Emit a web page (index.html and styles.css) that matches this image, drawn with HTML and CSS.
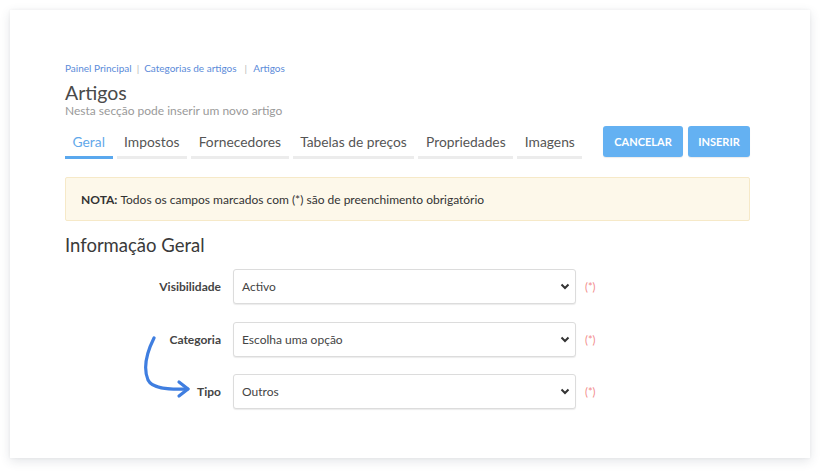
FILE: index.html
```html
<!DOCTYPE html>
<html lang="pt">
<head>
<meta charset="utf-8">
<title>Artigos</title>
<link rel="stylesheet" href="styles.css">
</head>
<body>
<div class="card">
  <nav class="crumbs">
    <a>Painel Principal</a><span class="sep">|</span><a>Categorias de artigos</a><span class="sep sep2">|</span><a>Artigos</a>
  </nav>
  <h1 class="title">Artigos</h1>
  <p class="subtitle">Nesta secção pode inserir um novo artigo</p>

  <div class="toolbar">
    <ul class="tabs">
      <li class="tab active">Geral</li>
      <li class="tab">Impostos</li>
      <li class="tab">Fornecedores</li>
      <li class="tab">Tabelas de preços</li>
      <li class="tab">Propriedades</li>
      <li class="tab">Imagens</li>
    </ul>
    <div class="actions">
      <button class="btn btn-cancel">CANCELAR</button>
      <button class="btn btn-insert">INSERIR</button>
    </div>
  </div>

  <div class="note"><b>NOTA:</b> Todos os campos marcados com (*) são de preenchimento obrigatório</div>

  <h2 class="section">Informação Geral</h2>

  <div class="form">
    <svg class="arrow" width="60" height="80" viewBox="0 0 60 80">
      <path d="M12 4 C5 18 1 34 6 46 C10 54 24 56 46 55" fill="none" stroke="#3f7ee0" stroke-width="3.2" stroke-linecap="round"/>
      <path d="M37 48 L46 55 L37 62" fill="none" stroke="#3f7ee0" stroke-width="3.2" stroke-linecap="round" stroke-linejoin="round"/>
    </svg>
    <div class="row">
      <label class="label">Visibilidade</label>
      <div class="select"><span>Activo</span><svg class="chev" width="10" height="7" viewBox="0 0 10 7"><path d="M1.5 1.5 L5 5 L8.5 1.5" fill="none" stroke="#333" stroke-width="2"/></svg></div>
      <span class="req">(*)</span>
    </div>
    <div class="row">
      <label class="label">Categoria</label>
      <div class="select"><span>Escolha uma opção</span><svg class="chev" width="10" height="7" viewBox="0 0 10 7"><path d="M1.5 1.5 L5 5 L8.5 1.5" fill="none" stroke="#333" stroke-width="2"/></svg></div>
      <span class="req">(*)</span>
    </div>
    <div class="row">
      <label class="label">Tipo</label>
      <div class="select"><span>Outros</span><svg class="chev" width="10" height="7" viewBox="0 0 10 7"><path d="M1.5 1.5 L5 5 L8.5 1.5" fill="none" stroke="#333" stroke-width="2"/></svg></div>
      <span class="req">(*)</span>
    </div>
  </div>
</div>
</body>
</html>
```

FILE: styles.css
```css
* { box-sizing: border-box; }
html, body { margin: 0; padding: 0; background: #ffffff; }
body {
  font-family: Lato, "Open Sans", "Liberation Sans", sans-serif;
  color: #444;
  width: 824px;
  height: 473px;
  overflow: hidden;
}
.card {
  margin: 10px 0 0 10px;
  width: 800px;
  height: 448px;
  background: #fff;
  box-shadow: 0 3px 10px rgba(60, 70, 90, 0.14), 0 0 3px rgba(60, 70, 90, 0.06);
  padding: 52px 60px 0 55px;
  position: relative;
}
.crumbs {
  font-size: 10px;
  line-height: 12px;
  color: #5b8bd9;
  display: flex;
  align-items: center;
}
.crumbs a { color: #5b8bd9; }
.sep { color: #b8b8b8; margin: 0 5px; }
.sep2 { margin: 0 6px 0 8px; }
.title {
  margin: 8px 0 0;
  font-size: 19.5px;
  line-height: 22px;
  font-weight: 400;
  color: #4a4a4a;
}
.subtitle {
  margin: 0;
  font-size: 12px;
  line-height: 14px;
  color: #9a9a9a;
}
.toolbar {
  display: flex;
  justify-content: space-between;
  align-items: flex-start;
  margin-top: 8px;
  width: 685px;
}
.tabs {
  list-style: none;
  margin: 0;
  padding: 0;
  display: flex;
  gap: 4px;
  padding-top: 2px;
}
.tab {
  font-size: 13.8px;
  line-height: 16px;
  padding: 6px 7.6px 6px;
  color: #555;
  border-bottom: 3px solid #ececec;
}
.tab.active {
  color: #62a8ea;
  border-bottom-color: #5aa8ee;
}
.actions { display: flex; gap: 5px; }
.btn {
  font-family: inherit;
  border: none;
  background: #64b1f2;
  color: #fff;
  font-weight: 700;
  font-size: 11px;
  height: 31px;
  border-radius: 3px;
  padding: 0;
  box-shadow: 0 1px 1px rgba(0,0,0,0.08);
}
.btn-cancel { width: 80px; }
.btn-insert { width: 62px; }
.note {
  margin-top: 18px;
  width: 685px;
  height: 44px;
  background: #fdf8ea;
  border: 1px solid #f6e9c8;
  border-radius: 2px;
  font-size: 12px;
  color: #333;
  padding-left: 15px;
  display: flex;
  align-items: center;
}
.note b { font-weight: 700; margin-right: 3px; }
.section {
  margin: 13px 0 0;
  font-size: 18.5px;
  line-height: 22px;
  font-weight: 400;
  color: #3a3a3a;
}
.form {
  position: relative;
  margin-top: 13px;
  display: flex;
  flex-direction: column;
  gap: 17.5px;
}
.row {
  display: flex;
  align-items: center;
}
.label {
  width: 156px;
  text-align: right;
  font-size: 12px;
  font-weight: 700;
  color: #444;
  margin-right: 12px;
}
.select {
  width: 343px;
  height: 35px;
  border: 1px solid #dcdcdc;
  border-radius: 3px;
  box-shadow: 0 1px 1px rgba(0,0,0,0.08);
  display: flex;
  align-items: center;
  justify-content: space-between;
  padding: 0 5px 0 8px;
  font-size: 12px;
  color: #444;
  background: #fff;
}
.chev { display: block; }
.req {
  margin-left: 9px;
  font-size: 11px;
  color: #f28a8a;
}
.arrow {
  position: absolute;
  left: 77px;
  top: 65px;
}
```
